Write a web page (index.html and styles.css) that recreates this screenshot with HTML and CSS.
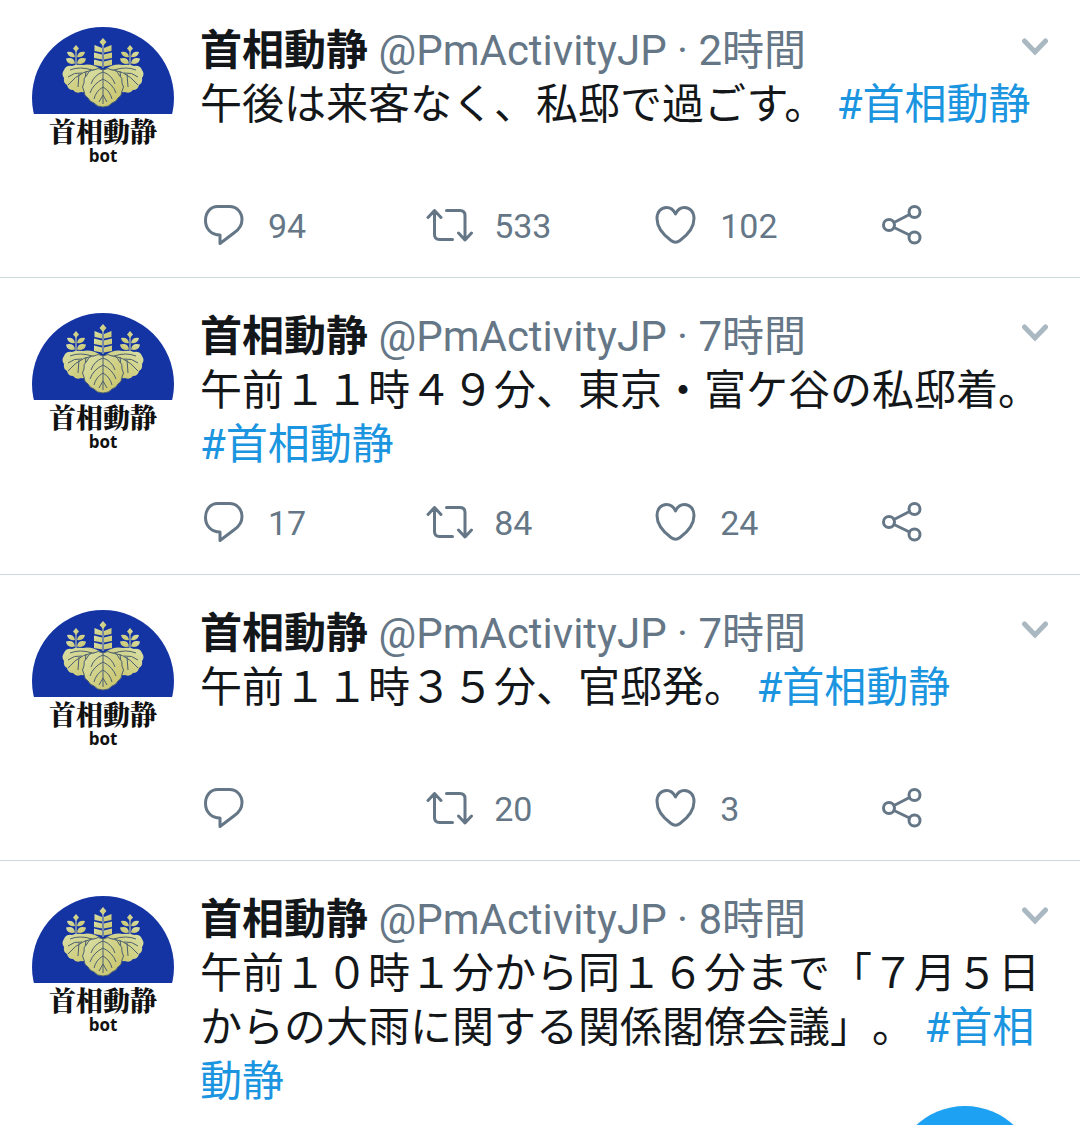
FILE: index.html
```
<!doctype html>
<html lang="ja">
<head>
  <meta charset="utf-8">
  <meta name="viewport" content="width=device-width, initial-scale=1">
  <title>首相動静</title>
  <link rel="stylesheet" href="styles.css">
</head>

<body>
  <!-- shared icons -->
  <svg class="sprite" aria-hidden="true">
    <symbol id="reply" viewBox="0 0 48 48">
      <path d="M17.500 5.500h12c7 0 12.500 5.500 12.500 13 0 5.500-2.500 9.500-7.500 13L20 42.500V34C11 34 5.500 27.500 5.500 19.500S10.500 5.500 17.500 5.500z"/>
    </symbol>
    <symbol id="retweet" viewBox="0 0 48 48">
      <path d="M2 16.500l6.500-7 6.500 7M8.500 9.500v24q0 5 5 5h13M20.500 9.500h13.500q5 0 5 5v24M32.500 32l6.500 7 6.500-7"/>
    </symbol>
    <symbol id="like" viewBox="0 0 48 48">
      <path d="M23.500 13C21.500 8.500 18 6.500 14.500 6.500 9 6.500 5 11 5 17.500c0 8.500 6.500 16.500 14 22q4.500 3.500 9 0c7.500-5.500 14-13.500 14-22C42 11 38 6.500 32.500 6.500 29 6.500 25.500 8.500 23.500 13z"/>
    </symbol>
    <symbol id="share" viewBox="0 0 48 48">
      <circle cx="11" cy="24" r="5.500"/>
      <circle cx="36.500" cy="11" r="5.500"/>
      <circle cx="36.500" cy="36.500" r="5.500"/>
      <path d="M16 21.500l15.500-8M16 26.500l15.500 7.500"/>
    </symbol>
    <symbol id="more" viewBox="0 0 28 28">
      <path d="M4.500 7L15 18 25.500 7"/>
    </symbol>
    <symbol id="crest" viewBox="0 0 142 87">
      <defs>
        <linearGradient id="gold" x1="0" y1="0" x2="1" y2="1">
          <stop offset="0" stop-color="#d9dfa6"/>
          <stop offset="1" stop-color="#c9c468"/>
        </linearGradient>
        <g id="sprig">
          <path d="M44 18l3 3.500-3 3.500-3-3.500z"/>
          <path d="M43 30q-7 1-8-5 7-1 8 5zM45 30q7 1 8-5-7-1-8 5z"/>
          <path d="M43 36.500q-8 2-9-5 8-2 9 5zM45 36.500q8 2 9-5-8-2-9 5z"/>
          <path class="stem" d="M44 24v15"/>
        </g>
        <g id="side-leaf">
          <path d="M70 43Q60 36 51 38q-7-1-11 1-6-1-8 4-3 4 0 8-1 5 3 7 1 5 6 5 3 4 8 2 5 1 9-3z"/>
          <path class="vein" d="M69 43Q50 41 36 58M60 43q-12-4-22 0M50 46q-8-1-14 4M47 47l-1 13M54 44l-1 9"/>
        </g>
      </defs>
      <g fill="url(#gold)">
        <use href="#sprig"/>
        <use href="#sprig" transform="translate(142 0) scale(-1 1)"/>
        <path d="M71 11l3.500 4-3.500 4-3.500-4z"/>
        <path d="M70 25.500l-7.500-1.500v-6l7.500 3zM72 25.500l7.500-1.500v-6l-7.500 3z"/>
        <path d="M70 32.500l-8-1.500v-5.500l8 2zM72 32.500l8-1.500v-5.500l-8 2z"/>
        <path d="M70 39.500l-8-1.500v-5.500l8 2zM72 39.500l8-1.500v-5.500l-8 2z"/>
        <path class="stem" d="M71 17v24"/>
        <use href="#side-leaf"/>
        <use href="#side-leaf" transform="translate(142 0) scale(-1 1)"/>
        <path class="front-leaf" d="M71 43q-5-3-9 0-5 0-7 5-4 3-3 8-3 4 0 8 0 5 4 7 2 4 6 5 3 4 9 4t9-4q4-1 6-5 4-2 4-7 3-4 0-8 1-5-3-8-2-5-7-5-4-3-9 0z"/>
        <path class="vein" d="M71 43v34M71 45q-9 3-12 12M71 45q9 3 12 12M71 52q-10 5-13 14M71 52q10 5 13 14M71 60q-7 4-9 12M71 60q7 4 9 12M71 68l-4 7M71 68l4 7"/>
      </g>
    </symbol>
  </svg>

  <main class="feed">
    <article class="tweet">
      <a class="avatar" href="#profile">
        <svg class="crest"><use href="#crest"/></svg>
        <span class="avatar-name">首相動静</span>
        <span class="avatar-bot">bot</span>
      </a>
      <div class="content">
        <div class="tweet-main">
          <header class="tweet-head">
            <div class="byline"><b>首相動静</b> <span class="meta">@PmActivityJP · 2時間</span></div>
            <button class="more" aria-label="その他"><svg><use href="#more"/></svg></button>
          </header>
          <p class="text">午後は来客なく、私邸で過ごす。 <a href="#tag">#首相動静</a></p>
        </div>
        <div class="actions">
          <button aria-label="返信"><svg><use href="#reply"/></svg><span>94</span></button>
          <button aria-label="リツイート"><svg><use href="#retweet"/></svg><span>533</span></button>
          <button aria-label="いいね"><svg><use href="#like"/></svg><span>102</span></button>
          <button aria-label="共有"><svg><use href="#share"/></svg></button>
        </div>
      </div>
    </article>

    <article class="tweet">
      <a class="avatar" href="#profile">
        <svg class="crest"><use href="#crest"/></svg>
        <span class="avatar-name">首相動静</span>
        <span class="avatar-bot">bot</span>
      </a>
      <div class="content">
        <div class="tweet-main">
          <header class="tweet-head">
            <div class="byline"><b>首相動静</b> <span class="meta">@PmActivityJP · 7時間</span></div>
            <button class="more" aria-label="その他"><svg><use href="#more"/></svg></button>
          </header>
          <p class="text">午前１１時４９分、東京・富ケ谷の私邸着。 <a href="#tag">#首相動静</a></p>
        </div>
        <div class="actions">
          <button aria-label="返信"><svg><use href="#reply"/></svg><span>17</span></button>
          <button aria-label="リツイート"><svg><use href="#retweet"/></svg><span>84</span></button>
          <button aria-label="いいね"><svg><use href="#like"/></svg><span>24</span></button>
          <button aria-label="共有"><svg><use href="#share"/></svg></button>
        </div>
      </div>
    </article>

    <article class="tweet">
      <a class="avatar" href="#profile">
        <svg class="crest"><use href="#crest"/></svg>
        <span class="avatar-name">首相動静</span>
        <span class="avatar-bot">bot</span>
      </a>
      <div class="content">
        <div class="tweet-main">
          <header class="tweet-head">
            <div class="byline"><b>首相動静</b> <span class="meta">@PmActivityJP · 7時間</span></div>
            <button class="more" aria-label="その他"><svg><use href="#more"/></svg></button>
          </header>
          <p class="text">午前１１時３５分、官邸発。 <a href="#tag">#首相動静</a></p>
        </div>
        <div class="actions">
          <button aria-label="返信"><svg><use href="#reply"/></svg></button>
          <button aria-label="リツイート"><svg><use href="#retweet"/></svg><span>20</span></button>
          <button aria-label="いいね"><svg><use href="#like"/></svg><span>3</span></button>
          <button aria-label="共有"><svg><use href="#share"/></svg></button>
        </div>
      </div>
    </article>

    <article class="tweet">
      <a class="avatar" href="#profile">
        <svg class="crest"><use href="#crest"/></svg>
        <span class="avatar-name">首相動静</span>
        <span class="avatar-bot">bot</span>
      </a>
      <div class="content">
        <div class="tweet-main">
          <header class="tweet-head">
            <div class="byline"><b>首相動静</b> <span class="meta">@PmActivityJP · 8時間</span></div>
            <button class="more" aria-label="その他"><svg><use href="#more"/></svg></button>
          </header>
          <p class="text">午前１０時１分から同１６分まで「７月５日からの大雨に関する関係閣僚会議」。 <a href="#tag">#首相動静</a></p>
        </div>
      </div>
    </article>
  </main>

  <button class="compose" aria-label="ツイートする"></button>
</body>
</html>
```
FILE: styles.css
```
* {
  box-sizing: border-box;
}
html, body {
  height: 100%;
  margin: 0;
  overflow: hidden;
}
body {
  background: #fff;
  color: #14171a;
  font-family: Roboto, "Noto Sans CJK JP", sans-serif;
  font-size: 42px;
  line-height: 54px;
  text-spacing-trim: space-all;
}
a {
  color: #1b95e0;
  text-decoration: none;
}
button {
  padding: 0;
  border: 0;
  background: none;
  color: inherit;
  font: inherit;
  cursor: pointer;
}
.sprite {
  position: absolute;
  width: 0;
  height: 0;
}
.feed {
  height: 100%;
  overflow: hidden;
}
.tweet {
  display: flex;
  gap: 26px;
  padding: 32px 32px 28px;
  border-bottom: 1px solid #ccd6dd;
}
.tweet:first-child {
  padding-top: 24px;
}
.tweet:last-child {
  border-bottom: 0;
}

/* avatar */
.avatar {
  display: flex;
  flex: none;
  flex-direction: column;
  align-items: center;
  width: 142px;
  height: 142px;
  margin-top: 3px;
  border-radius: 50%;
  overflow: hidden;
  color: #111;
  font-weight: bold;
  white-space: nowrap;
}
.crest {
  flex: none;
  width: 142px;
  height: 87px;
  background: #1434a4;
}
.avatar-name {
  font-family: "Noto Serif CJK JP", "Noto Sans CJK JP", serif;
  font-size: 27px;
  font-weight: 900;
  line-height: 33px;
}
.avatar-bot {
  font-family: "Open Sans", sans-serif;
  font-size: 17px;
  line-height: 18px;
}
.stem {
  fill: none;
  stroke: #d9dfa6;
  stroke-width: 1;
}
.vein {
  fill: none;
  stroke: #4c5f70;
  stroke-width: 1;
}
.front-leaf {
  stroke: #4c5f70;
  stroke-width: 1;
}

/* tweet */
.content {
  flex: 1;
  min-width: 0;
}
.tweet-main {
  min-height: 151px;
}
.tweet-head {
  display: flex;
  justify-content: space-between;
}
.byline {
  height: 54px;
  white-space: nowrap;
}
.meta {
  color: #657786;
}
.more {
  height: 48px;
}
.more svg {
  display: block;
  width: 28px;
  height: 28px;
  fill: none;
  stroke: #aab8c2;
  stroke-width: 5;
  stroke-linecap: round;
}
.text {
  margin: 0;
}
.actions {
  display: grid;
  grid-template-columns: 4fr 4fr 4fr 3fr;
  margin-top: 26px;
  color: #657786;
  font-size: 34px;
  line-height: 48px;
}
.actions button {
  display: flex;
  gap: 20px;
  align-items: center;
  height: 48px;
}
.actions span {
  padding-top: 2px;
}
.actions svg {
  flex: none;
  width: 48px;
  height: 48px;
  fill: none;
  stroke: currentColor;
  stroke-width: 3;
  stroke-linecap: round;
  stroke-linejoin: round;
}

.compose {
  position: fixed;
  right: 43px;
  bottom: -125px;
  width: 144px;
  height: 144px;
  border-radius: 50%;
  background: #1da1f2;
  box-shadow: 0 4px 8px rgba(0, 0, 0, 0.1);
}
```
